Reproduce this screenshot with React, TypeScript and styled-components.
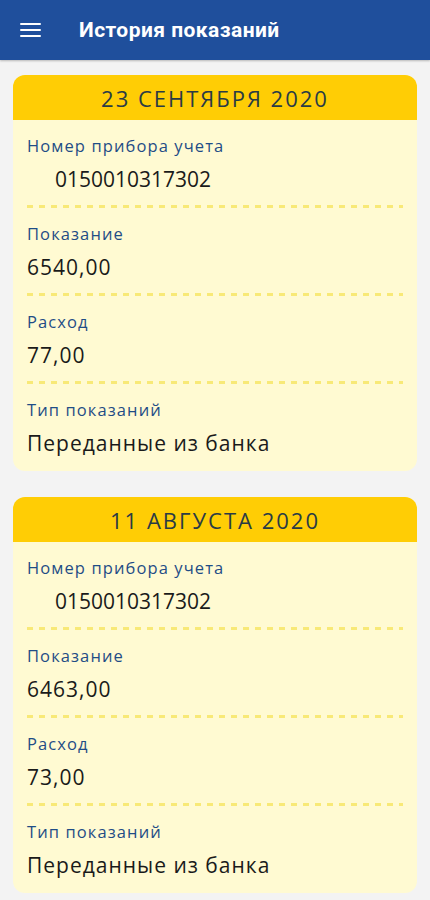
import React from "react"
import styled, { createGlobalStyle } from "styled-components"

const Global = createGlobalStyle`
  html, body { margin: 0; padding: 0; background: #f3f3f3; }
  body { font-family: "Open Sans", "Noto Sans", sans-serif; }
`

const Page = styled.div`
  width: 430px;
  min-height: 900px;
  background: #f3f3f3;
`

const TopBar = styled.div`
  height: 60px;
  background: #1f4f9c;
  display: flex;
  align-items: center;
  padding-left: 20px;
  box-sizing: border-box;
  box-shadow: 0 1px 2px rgba(0,0,0,0.25);
`

const Burger = styled.div`
  width: 21px;
  display: flex;
  flex-direction: column;
  gap: 4px;
  margin-right: 38px;
  span {
    height: 2px;
    background: #fff;
    border-radius: 1px;
  }
`

const Title = styled.h1`
  margin: 0;
  font-family: Roboto, "Noto Sans", sans-serif;
  font-weight: 700;
  font-size: 21px;
  color: #fff;
  letter-spacing: 0.45px;
`

const List = styled.div`
  padding: 15px 13px;
  display: flex;
  flex-direction: column;
  gap: 26px;
`

const Card = styled.div`
  background: #fffad2;
  border-radius: 12px;
  overflow: hidden;
`

const CardHead = styled.div`
  height: 45px;
  background: #ffcd05;
  display: flex;
  align-items: center;
  justify-content: center;
  font-size: 22px;
  color: #2a3b45;
  letter-spacing: 2px;
`

const CardBody = styled.div`
  padding: 0 14px 13px;
`

const Field = styled.div`
  padding-top: 15px;
`

const Label = styled.div`
  font-size: 16.5px;
  line-height: 22px;
  color: #1f4d86;
  letter-spacing: 1.1px;
`

const Value = styled.div<{ $indent?: boolean }>`
  margin-top: 7px;
  font-size: 21px;
  line-height: 30px;
  color: #1a1a1a;
  padding-left: ${p => (p.$indent ? "28px" : "0")};
  letter-spacing: ${p => (p.$indent ? "0" : "1px")};
`

const Dashes = styled.div`
  margin-top: 11px;
  height: 3px;
  background: repeating-linear-gradient(90deg, #f8e977 0 6px, transparent 6px 12px);
`

type Reading = {
  date: string
  meter: string
  value: string
  usage: string
  kind: string
}

const readings: Reading[] = [
  { date: "23 СЕНТЯБРЯ 2020", meter: "0150010317302", value: "6540,00", usage: "77,00", kind: "Переданные из банка" },
  { date: "11 АВГУСТА 2020", meter: "0150010317302", value: "6463,00", usage: "73,00", kind: "Переданные из банка" },
]

function ReadingCard({ r }: { r: Reading }) {
  return (
    <Card>
      <CardHead>{r.date}</CardHead>
      <CardBody>
        <Field>
          <Label>Номер прибора учета</Label>
          <Value $indent>{r.meter}</Value>
          <Dashes />
        </Field>
        <Field>
          <Label>Показание</Label>
          <Value>{r.value}</Value>
          <Dashes />
        </Field>
        <Field>
          <Label>Расход</Label>
          <Value>{r.usage}</Value>
          <Dashes />
        </Field>
        <Field>
          <Label>Тип показаний</Label>
          <Value>{r.kind}</Value>
        </Field>
      </CardBody>
    </Card>
  )
}

export default function App() {
  return (
    <Page>
      <Global />
      <TopBar>
        <Burger><span /><span /><span /></Burger>
        <Title>История показаний</Title>
      </TopBar>
      <List>
        {readings.map(r => <ReadingCard key={r.date} r={r} />)}
      </List>
    </Page>
  )
}
